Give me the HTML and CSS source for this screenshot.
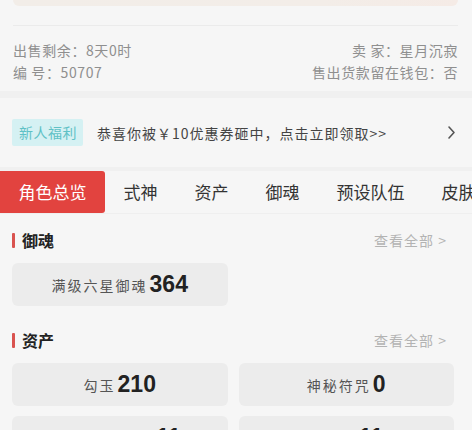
FILE: index.html
```html
<!DOCTYPE html>
<html lang="zh-CN">
<head>
<meta charset="utf-8">
<title>角色详情</title>
<link rel="stylesheet" href="styles.css">
</head>
<body>
<div class="page">
  <div class="summary">
    <div class="summary-card"></div>
    <div class="divider"></div>
    <div class="info">
      <div class="info-row">
        <span>出售剩余：8天0时</span>
        <span>卖 家：星月沉寂</span>
      </div>
      <div class="info-row">
        <span>编 号：50707</span>
        <span>售出货款留在钱包：否</span>
      </div>
    </div>
  </div>

  <div class="band"></div>

  <div class="promo">
    <span class="promo-tag">新人福利</span>
    <span class="promo-text">恭喜你被￥10优惠券砸中，点击立即领取&gt;&gt;</span>
    <svg class="promo-arrow" width="9" height="15" viewBox="0 0 9 15">
      <path d="M2 2 L7 7.5 L2 13" fill="none" stroke="#555" stroke-width="1.6" stroke-linecap="round" stroke-linejoin="round"/>
    </svg>
  </div>

  <div class="band band-thin"></div>

  <nav class="tabs">
    <span class="tab active">角色总览</span>
    <span class="tab">式神</span>
    <span class="tab">资产</span>
    <span class="tab">御魂</span>
    <span class="tab">预设队伍</span>
    <span class="tab">皮肤</span>
  </nav>

  <section class="section">
    <div class="section-head">
      <h2 class="section-title">御魂</h2>
      <span class="more">查看全部 &gt;</span>
    </div>
    <div class="grid">
      <div class="stat"><span class="stat-label">满级六星御魂</span><span class="stat-value">364</span></div>
    </div>
  </section>

  <section class="section">
    <div class="section-head">
      <h2 class="section-title">资产</h2>
      <span class="more">查看全部 &gt;</span>
    </div>
    <div class="grid">
      <div class="stat"><span class="stat-label">勾玉</span><span class="stat-value">210</span></div>
      <div class="stat"><span class="stat-label">神秘符咒</span><span class="stat-value">0</span></div>
      <div class="stat"><span class="stat-label">现世召唤符咒</span><span class="stat-value">11</span></div>
      <div class="stat"><span class="stat-label">皮肤券</span><span class="stat-value">11</span></div>
    </div>
  </section>
</div>
</body>
</html>
```

FILE: styles.css
```css
* {
  box-sizing: border-box;
}

html, body {
  margin: 0;
  padding: 0;
  background: #f6f6f6;
}

body {
  font-family: "Noto Sans CJK SC", "Noto Sans", sans-serif;
  color: #333;
  overflow: hidden;
}

.page {
  width: 472px;
}

/* seller summary */
.summary {
  padding: 0 14px 0 13px;
}

.summary-card {
  height: 6px;
  background: linear-gradient(90deg, #f2ede8 0%, #f3ede8 70%, #f5ebe6 100%);
  border-radius: 0 0 6px 6px;
}

.divider {
  height: 1px;
  margin-top: 19px;
  background: #ebebeb;
}

.info {
  padding: 13px 0 8px;
}

.info-row {
  display: flex;
  justify-content: space-between;
  font-size: 14px;
  line-height: 22px;
  letter-spacing: 0.6px;
  color: #8f8f8f;
}

.band {
  height: 7px;
  background: #f0f0f0;
}

.band-thin {
  height: 4px;
}

/* promotion banner */
.promo {
  display: flex;
  align-items: center;
  height: 69px;
  padding: 0 16px 0 12px;
}

.promo-tag {
  font-size: 14px;
  line-height: 27px;
  padding: 0 6px 0 7px;
  letter-spacing: 0.5px;
  background: #d5f1f3;
  color: #5fc1c6;
  border-radius: 2px;
}

.promo-text {
  margin-left: 14px;
  font-size: 14px;
  letter-spacing: 1px;
  color: #444;
  flex: 1;
  white-space: nowrap;
}

.promo-arrow {
  flex: none;
}

/* tab strip */
.tabs {
  display: flex;
  height: 43px;
  white-space: nowrap;
  overflow: hidden;
  border-bottom: 1px solid #efefef;
}

.tab {
  flex: none;
  padding: 0 18.5px;
  font-size: 17px;
  line-height: 42px;
  color: #333;
}

.tab.active {
  background: #e2433f;
  color: #fff;
  border-radius: 0 3px 3px 0;
}

/* content sections */
.section {
  padding: 13px 18px 8px 12px;
}

.section-head {
  display: flex;
  align-items: center;
  justify-content: space-between;
  height: 26px;
  margin-bottom: 10px;
}

.section-title {
  margin: 0;
  display: flex;
  align-items: center;
  font-size: 16px;
  font-weight: 700;
  color: #222;
}

.section-title::before {
  content: "";
  width: 3px;
  height: 15px;
  margin-right: 7px;
  background: #d9534f;
  border-radius: 1px;
}

.more {
  font-size: 14px;
  letter-spacing: 1px;
  color: #b3b3b3;
  margin-right: 7px;
}

.grid {
  display: grid;
  grid-template-columns: 1fr 1fr;
  gap: 10px 11px;
}

.stat {
  display: flex;
  align-items: center;
  justify-content: center;
  height: 43px;
  background: #ececec;
  border-radius: 6px;
}

.stat-label {
  font-size: 14px;
  letter-spacing: 2px;
  color: #555;
}

.stat-value {
  margin-left: 2px;
  font-family: "Liberation Sans", "Noto Sans", sans-serif;
  font-size: 23px;
  font-weight: 700;
  color: #222;
}
```
